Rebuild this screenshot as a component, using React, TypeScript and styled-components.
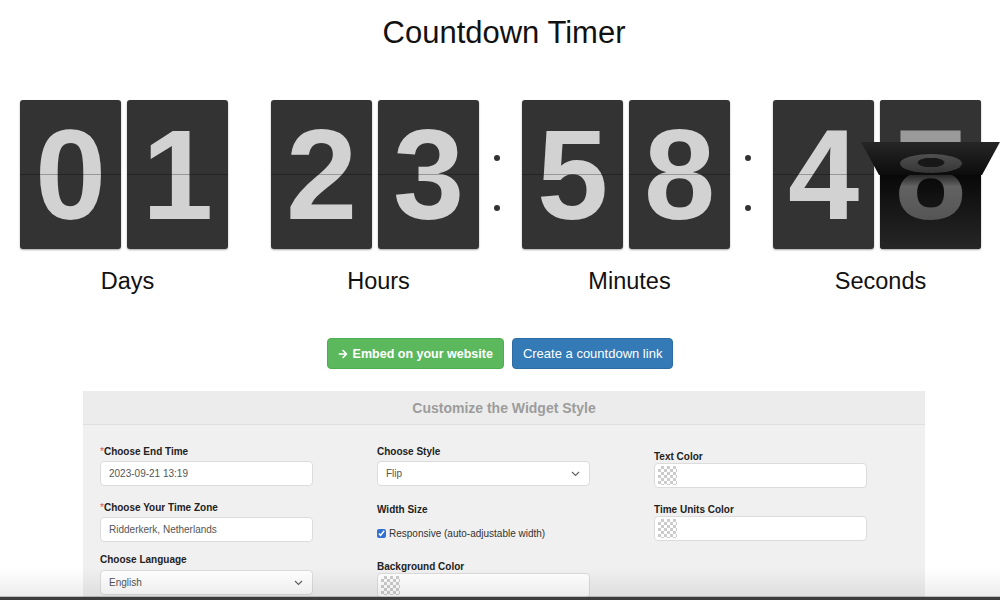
import styled, {createGlobalStyle} from "styled-components";
import {FaArrowRight} from "react-icons/fa";

const GlobalStyle = createGlobalStyle`
    * {
        box-sizing: border-box;
    }
    body {
        margin: 0;
        background: #fff;
        font-family: "Liberation Sans", Arial, sans-serif;
        color: #111;
        overflow: hidden;
    }
    body::after {
        content: "";
        position: fixed;
        left: 0;
        right: 0;
        bottom: 0;
        height: 32px;
        pointer-events: none;
        background: linear-gradient(rgba(0, 0, 0, 0) 0%, rgba(0, 0, 0, 0.07) 88%, #3c3c3c 92%, #3c3c3c 100%);
    }
`

type Unit = {
    label: string;
    digits: string;
}

const units: Unit[] = [
    {label: "Days", digits: "01"},
    {label: "Hours", digits: "23"},
    {label: "Minutes", digits: "58"},
    {label: "Seconds", digits: "4"},
]

const Page = styled.div`
    width: 1000px;
    height: 600px;
    padding-top: 15px;
`
const Title = styled.h1`
    margin: 0;
    padding-left: 8px;
    text-align: center;
    font-weight: 400;
    font-size: 31px;
    line-height: 36px;
    color: #111;
`
const Timer = styled.div`
    display: flex;
    padding-left: 20px;
    margin-top: 49px;
`
const Group = styled.div`
    width: 208px;
    display: flex;
    flex-direction: column;
    align-items: center;
`
const Cards = styled.div`
    display: flex;
    gap: 6px;
`
const Card = styled.div`
    position: relative;
    width: 101px;
    height: 149px;
    border-radius: 3px;
    background: #333;
    box-shadow: 0 1px 2px rgba(0, 0, 0, 0.35);

    &::after {
        content: "";
        position: absolute;
        left: 0;
        right: 0;
        top: 74px;
        height: 1px;
        background: rgba(0, 0, 0, 0.28);
    }
`
const Digit = styled.div<{ $color?: string }>`
    width: 101px;
    height: 149px;
    text-align: center;
    font-weight: 700;
    font-size: 128px;
    line-height: 149px;
    color: ${p => p.$color ?? "#d2d2d2"};
`
const Half = styled.div<{ $bottom?: boolean }>`
    height: 74.5px;
    overflow: hidden;
    background: ${p => p.$bottom ? "linear-gradient(#080808, #151515 40%, #262626)" : "#333"};
    border-radius: ${p => p.$bottom ? "0 0 3px 3px" : "3px 3px 0 0"};

    & > ${Digit} {
        margin-top: ${p => p.$bottom ? "-74.5px" : "0"};
    }
`
const FadedDigit = styled(Digit)`
    background: linear-gradient(#262626 0%, #262626 50%, #626262 58%, #555 80%, #383838 100%);
    -webkit-background-clip: text;
    background-clip: text;
    -webkit-text-fill-color: transparent;
`
const Flap = styled.div`
    position: absolute;
    left: -19px;
    right: -19px;
    top: 42px;
    height: 33px;
    clip-path: polygon(0 0, 100% 0, calc(100% - 18px) 100%, 18px 100%);
    background: linear-gradient(#262626, #0c0c0c);
    display: flex;
    justify-content: center;
    align-items: flex-end;
    padding-bottom: 2px;
    z-index: 2;
`
const FlapRing = styled.div`
    width: 62px;
    height: 19px;
    border-radius: 50%;
    background: radial-gradient(ellipse 14px 5px at 50% 45%, #181818 90%, transparent 100%),
    linear-gradient(#505050, #353535);
`
const Label = styled.div`
    margin: 19px 0 0 7px;
    font-size: 23.5px;
    line-height: 26px;
    color: #111;
`
const Separator = styled.div<{ $hidden?: boolean }>`
    width: 43px;
    height: 149px;
    padding: 17px 8px 0 0;
    display: flex;
    flex-direction: column;
    justify-content: center;
    align-items: center;
    gap: 44px;
    visibility: ${p => p.$hidden ? "hidden" : "visible"};

    &::before, &::after {
        content: "";
        width: 6px;
        height: 6px;
        border-radius: 50%;
        background: #333;
    }
`
const Actions = styled.div`
    display: flex;
    justify-content: center;
    gap: 8px;
    margin-top: 44px;
`
const Button = styled.button<{ $variant: "green" | "blue" }>`
    height: 31px;
    padding: 0 ${p => p.$variant === "green" ? 10 : 10}px;
    border-radius: 4px;
    border: 1px solid ${p => p.$variant === "green" ? "#4cae4c" : "#2e6da4"};
    background: ${p => p.$variant === "green" ? "#5cb85c" : "#337ab7"};
    color: #fff;
    font-family: inherit;
    font-size: ${p => p.$variant === "green" ? 12.5 : 13}px;
    font-weight: ${p => p.$variant === "green" ? 700 : 400};
    display: flex;
    align-items: center;
    gap: 5px;

    svg {
        width: 10px;
        height: 10px;
    }
`
const Panel = styled.section`
    width: 842px;
    margin: 22px 0 0 83px;
    background: #f0f0f0;
    height: 220px;
`
const PanelHeader = styled.h2`
    margin: 0;
    height: 34px;
    line-height: 34px;
    text-align: center;
    font-size: 14px;
    font-weight: 700;
    color: #9c9c9c;
    background: #ececec;
    border-bottom: 1px solid #dedede;
`
const Form = styled.div`
    display: grid;
    grid-template-columns: repeat(3, 213px);
    column-gap: 64px;
    padding: 20px 17px 0;
`
const Column = styled.div<{ $offset?: number }>`
    display: flex;
    flex-direction: column;
    padding-top: ${p => p.$offset ?? 0}px;
`
const Field = styled.div<{ $space?: number }>`
    display: flex;
    flex-direction: column;
    margin-bottom: ${p => p.$space ?? 15}px;
`
const FieldLabel = styled.label<{ $space?: number }>`
    font-size: 10px;
    font-weight: 700;
    line-height: 13px;
    color: #222;
    margin-bottom: ${p => p.$space ?? 3}px;

    span {
        color: #d9534f;
        font-weight: 400;
    }
`
const Control = styled.div`
    height: 25px;
    background: #fff;
    border: 1px solid #dcdcdc;
    border-radius: 4px;
    display: flex;
    align-items: center;
    justify-content: space-between;
    padding: 0 9px 0 8px;
    font-size: 10px;
    color: #555;
`
const ColorControl = styled(Control)`
    padding: 0 0 0 3px;
`
const Swatch = styled.div`
    width: 19px;
    height: 19px;
    background-color: #fff;
    background-image: linear-gradient(45deg, #ccc 25%, transparent 25%, transparent 75%, #ccc 75%),
    linear-gradient(45deg, #ccc 25%, transparent 25%, transparent 75%, #ccc 75%);
    background-size: 6px 6px;
    background-position: 0 0, 3px 3px;
`
const CheckRow = styled.label`
    display: flex;
    align-items: center;
    gap: 3px;
    font-size: 10px;
    color: #333;
    margin-top: 9px;

    input {
        width: 9px;
        height: 9px;
        margin: 0;
        accent-color: #2f6fd6;
    }
`

const Chevron = () => (
    <svg width="9" height="6" viewBox="0 0 9 6" fill="none">
        <path d="M1 1l3.5 3.5L8 1" stroke="#666" strokeWidth="1.2"/>
    </svg>
)

const FlipCard = () => (
    <Card>
        <Half>
            <Digit $color="#9a9a9a">7</Digit>
        </Half>
        <Half $bottom>
            <FadedDigit>8</FadedDigit>
        </Half>
        <Flap>
            <FlapRing/>
        </Flap>
    </Card>
)

export default function App() {
    return (
        <Page>
            <GlobalStyle/>
            <Title>Countdown Timer</Title>

            <Timer>
                {units.map((unit, i) => (
                    <>
                        {i > 0 && <Separator key={"s" + i} $hidden={i === 1}/>}
                        <Group key={unit.label}>
                            <Cards>
                                {unit.digits.split("").map((d, j) => (
                                    <Card key={j}>
                                        <Digit>{d}</Digit>
                                    </Card>
                                ))}
                                {unit.label === "Seconds" && <FlipCard/>}
                            </Cards>
                            <Label>{unit.label}</Label>
                        </Group>
                    </>
                ))}
            </Timer>

            <Actions>
                <Button $variant="green"><FaArrowRight/>Embed on your website</Button>
                <Button $variant="blue">Create a countdown link</Button>
            </Actions>

            <Panel>
                <PanelHeader>Customize the Widget Style</PanelHeader>
                <Form>
                    <Column>
                        <Field>
                            <FieldLabel><span>*</span>Choose End Time</FieldLabel>
                            <Control>2023-09-21 13:19</Control>
                        </Field>
                        <Field $space={11}>
                            <FieldLabel><span>*</span>Choose Your Time Zone</FieldLabel>
                            <Control>Ridderkerk, Netherlands</Control>
                        </Field>
                        <Field>
                            <FieldLabel $space={4}>Choose Language</FieldLabel>
                            <Control>English<Chevron/></Control>
                        </Field>
                    </Column>
                    <Column>
                        <Field $space={17}>
                            <FieldLabel>Choose Style</FieldLabel>
                            <Control>Flip<Chevron/></Control>
                        </Field>
                        <Field $space={21}>
                            <FieldLabel>Width Size</FieldLabel>
                            <CheckRow>
                                <input type="checkbox" defaultChecked/>
                                Responsive (auto-adjustable width)
                            </CheckRow>
                        </Field>
                        <Field>
                            <FieldLabel $space={0}>Background Color</FieldLabel>
                            <ColorControl><Swatch/></ColorControl>
                        </Field>
                    </Column>
                    <Column $offset={5}>
                        <Field $space={15}>
                            <FieldLabel $space={0}>Text Color</FieldLabel>
                            <ColorControl><Swatch/></ColorControl>
                        </Field>
                        <Field>
                            <FieldLabel $space={0}>Time Units Color</FieldLabel>
                            <ColorControl><Swatch/></ColorControl>
                        </Field>
                    </Column>
                </Form>
            </Panel>
        </Page>
    );
}
